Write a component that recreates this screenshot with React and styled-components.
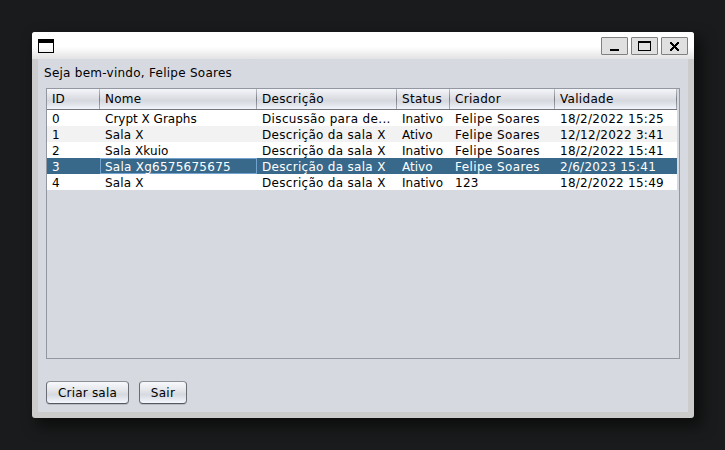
import React from "react";
import styled, { createGlobalStyle } from "styled-components";

const GlobalStyle = createGlobalStyle`
  * { box-sizing: border-box; }
  body {
    margin: 0;
    background: #1a1b1c;
    font: 12px/16px "DejaVu Sans", sans-serif;
    color: #000;
  }
`;

const Desktop = styled.main`
  width: 725px;
  height: 450px;
  padding: 32px;
  background: #1a1b1c;
  overflow: hidden;
`;

const Window = styled.section`
  width: 662px;
  height: 386px;
  display: flex;
  flex-direction: column;
  border-radius: 3px;
  background: #ccc;
  box-shadow: 6px 7px 14px 2px rgba(0, 0, 0, 0.5);
  overflow: hidden;
`;

const TitleBar = styled.header`
  height: 27px;
  flex: none;
  display: flex;
  align-items: flex-start;
  gap: 3px;
  padding: 5px 6px 0;
  background: linear-gradient(#fff 0, #fff 55%, #e2e2e2 100%);
`;

const AppIcon = styled.svg`
  width: 16px;
  height: 14px;
  margin: 2px auto 0 0;
`;

const WindowButton = styled.button`
  width: 27px;
  height: 18px;
  padding: 0;
  border: 1px solid #808080;
  border-radius: 1px;
  background: #e0e0e0;
  svg { display: block; width: 25px; height: 16px; }
`;

const Panel = styled.div`
  flex: 1;
  margin: 0 6px 6px;
  padding: 6px 8px 8px;
  display: flex;
  flex-direction: column;
  background: #d6d9e0;
`;

const Text = styled.span`
  white-space: pre;
  letter-spacing: ${(p) => p.$spacing || 0}px;
`;

const Greeting = styled.div`
  height: 23px;
  margin-left: -2px;
`;

const ScrollPane = styled.div`
  width: 634px;
  height: 271px;
  border: 1px solid #9297a1;
`;

const Row = styled.div`
  width: 630px;
  height: 16px;
  display: grid;
  grid-template-columns: 53px 157px 140px 53px 105px 122px;
  color: ${(p) => (p.$selected ? "#fff" : "#000")};
  background: ${(p) => (p.$selected ? "#39698a" : p.$striped ? "#f2f2f2" : "#fff")};
`;

const HeaderRow = styled(Row)`
  height: 21px;
  border-bottom: 1px solid #73767d;
  background: linear-gradient(#f4f5f9 0, #e4e6eb 30%, #d6d8df 58%, #dfe2e9 75%, #f2f5fc 100%);
`;

const HeaderCell = styled.div`
  padding: 2px 0 0 5px;
  border-right: 1px solid;
  border-image: linear-gradient(#c4c7ce, #7d8088 50%, #b0b3bb) 1;
`;

const Cell = styled.div`
  height: 16px;
  padding-left: 5px;
  line-height: 18px;
  white-space: nowrap;
  box-shadow: ${(p) => (p.$focused ? "inset 0 0 0 1px #73a4d1" : "none")};
`;

const Actions = styled.footer`
  display: flex;
  gap: 10px;
  margin-top: 22px;
`;

const Button = styled.button`
  width: ${(p) => p.$width}px;
  height: 23px;
  padding: 0;
  border: 1px solid;
  border-color: #8d9096 #696c72 #55585e;
  border-radius: 4px;
  background: linear-gradient(#f8f9fb 0, #e5e7eb 38%, #d6d9df 60%, #e8ebf1 85%, #f5f8ff 100%);
  box-shadow: 0 1px 0 #b9bcc3;
  font: inherit;
  line-height: 20px;
  color: #000;
`;

const headers = [
  { label: "ID", spacing: 0 },
  { label: "Nome", spacing: 0.25 },
  { label: "Descrição", spacing: 0.33 },
  { label: "Status", spacing: 0.3 },
  { label: "Criador", spacing: 0.3 },
  { label: "Validade", spacing: 0.3 },
];

const rooms = [
  ["0", "Crypt X Graphs", "Discussão para de...", "Inativo", "Felipe Soares", "18/2/2022 15:25"],
  ["1", "Sala X", "Descrição da sala X", "Ativo", "Felipe Soares", "12/12/2022 3:41"],
  ["2", "Sala Xkuio", "Descrição da sala X", "Inativo", "Felipe Soares", "18/2/2022 15:41"],
  ["3", "Sala Xg6575675675", "Descrição da sala X", "Ativo", "Felipe Soares", "2/6/2023 15:41"],
  ["4", "Sala X", "Descrição da sala X", "Inativo", "123", "18/2/2022 15:49"],
];

const spacings = {
  "Crypt X Graphs": 0,
  "Sala X": 0.15,
  "Sala Xkuio": 0.1,
  "Sala Xg6575675675": 0.25,
  "Discussão para de...": 0.36,
  "Descrição da sala X": 0.3,
  "Inativo": 0,
  "Ativo": 0,
  "Felipe Soares": 0.4,
};

const selectedRow = 3;

export default function App() {
  return (
    <>
      <GlobalStyle />
      <Desktop>
        <Window>
          <TitleBar>
            <AppIcon viewBox="0 0 16 14" shapeRendering="crispEdges">
              <path d="M0 0h16v14H0zM1 4v9h14V4z" fillRule="evenodd" />
            </AppIcon>
            <WindowButton aria-label="Minimizar">
              <svg viewBox="0 0 25 16" shapeRendering="crispEdges"><path d="M8 11h9v2H8z" /></svg>
            </WindowButton>
            <WindowButton aria-label="Maximizar">
              <svg viewBox="0 0 25 16" shapeRendering="crispEdges">
                <path d="M6 3h13v10H6zM7 5v7h11V5z" fillRule="evenodd" />
              </svg>
            </WindowButton>
            <WindowButton aria-label="Fechar">
              <svg viewBox="0 0 25 16" shapeRendering="crispEdges">
                <path d="M8 4h2v1h-2zM15 4h2v1h-2zM8 5h3v1h-3zM14 5h3v1h-3zM9 6h3v1h-3zM13 6h3v1h-3zM10 7h5v1h-5zM11 8h3v1h-3zM10 9h5v1h-5zM9 10h3v1h-3zM13 10h3v1h-3zM8 11h3v1h-3zM14 11h3v1h-3zM8 12h2v1h-2zM15 12h2v1h-2z" />
              </svg>
            </WindowButton>
          </TitleBar>
          <Panel>
            <Greeting><Text $spacing={0.26}>Seja bem-vindo, Felipe Soares</Text></Greeting>
            <ScrollPane>
              <HeaderRow>
                {headers.map(({ label, spacing }) => (
                  <HeaderCell key={label}><Text $spacing={spacing}>{label}</Text></HeaderCell>
                ))}
              </HeaderRow>
              {rooms.map((room, r) => (
                <Row key={room[0]} $selected={r === selectedRow} $striped={r % 2 === 1}>
                  {room.map((value, c) => (
                    <Cell key={c} $focused={r === selectedRow && c === 1}>
                      <Text $spacing={spacings[value] ?? 0.27}>{value}</Text>
                    </Cell>
                  ))}
                </Row>
              ))}
            </ScrollPane>
            <Actions>
              <Button $width={83}><Text $spacing={0.2}>Criar sala</Text></Button>
              <Button $width={48}><Text $spacing={0.3}>Sair</Text></Button>
            </Actions>
          </Panel>
        </Window>
      </Desktop>
    </>
  );
}
